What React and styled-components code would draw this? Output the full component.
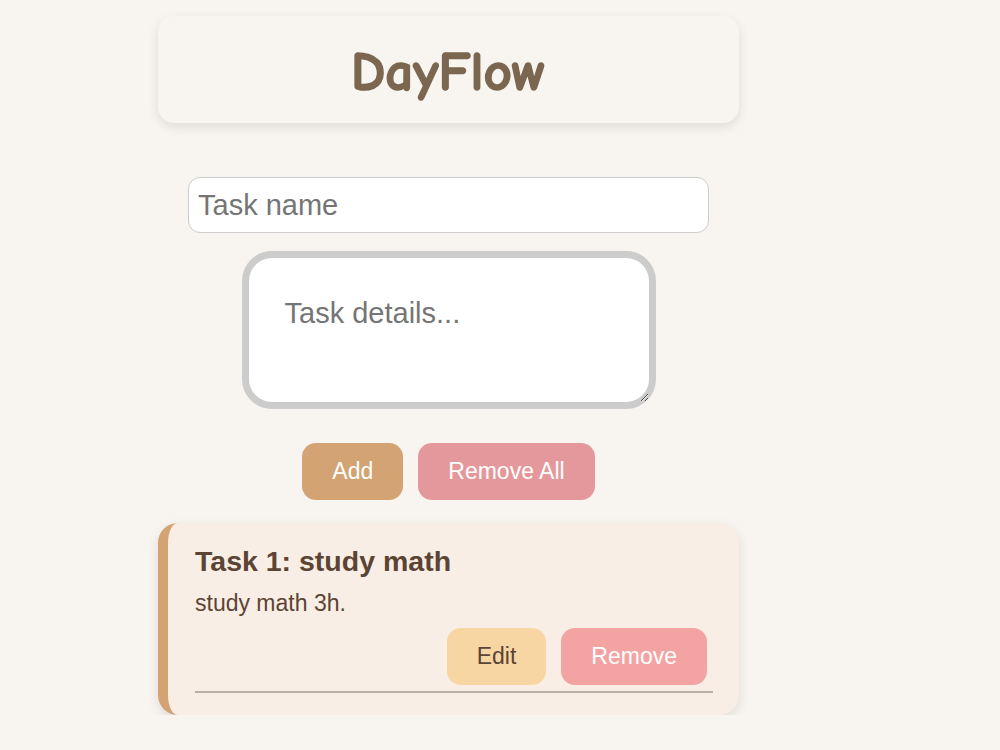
import styled, { createGlobalStyle } from "styled-components";

const GlobalStyle = createGlobalStyle`
  body {
    margin: 8px;
    background: #f8f4f0;
    font-family: "Liberation Sans", Arial, sans-serif;
  }
`;

function App() {
  return (
    <>
      <GlobalStyle />
      <Wrapper>
        <Header>
          <Title>DayFlow</Title>
        </Header>
        <Form>
          <NameInput placeholder="Task name" />
          <DetailsArea placeholder="Task details..." />
          <ButtonRow>
            <ActionButton $bg="#d4a373">Add</ActionButton>
            <ActionButton $bg="#e5989b">Remove All</ActionButton>
          </ButtonRow>
        </Form>
        <TaskCard>
          <TaskTitle>Task 1: study math</TaskTitle>
          <TaskText>study math 3h.</TaskText>
          <TaskActions>
            <ActionButton $bg="#f7d6a3" $color="#5a4434">Edit</ActionButton>
            <ActionButton $bg="#f4a3a3">Remove</ActionButton>
          </TaskActions>
          <Divider />
        </TaskCard>
      </Wrapper>
    </>
  );
}

export default App;

const Wrapper = styled.div`
  width: 581px;
  margin: 8px 0 0 150px;
  display: flex;
  flex-direction: column;
`;

const Header = styled.header`
  height: 107px;
  background: #f8f4ef;
  border-radius: 16px;
  box-shadow: 0 4px 12px rgba(0, 0, 0, 0.1);
  display: flex;
  align-items: center;
  justify-content: center;
`;

const Title = styled.h1`
  margin: 4px 0 0;
  font-family: "Comic Sans MS", "Comic Neue", cursive;
  font-size: 55px;
  font-weight: bold;
  color: #7b6650;
  -webkit-text-stroke: 1.5px #7b6650;
`;

const Form = styled.div`
  margin-top: 54px;
  display: flex;
  flex-direction: column;
  align-items: center;
`;

const NameInput = styled.input`
  box-sizing: border-box;
  width: 521px;
  height: 56px;
  padding: 0 9px;
  border: 1px solid #ccc;
  border-radius: 12px;
  background: #fff;
  font-family: "Liberation Sans", Arial, sans-serif;
  font-size: 29px;
  color: #333;
  &::placeholder {
    color: #757575;
  }
`;

const DetailsArea = styled.textarea`
  box-sizing: border-box;
  margin-top: 18px;
  width: 414px;
  height: 158px;
  padding: 41px 36px 0;
  border: 7px solid #ccc;
  border-radius: 30px;
  background: #fff;
  font-family: "Liberation Sans", Arial, sans-serif;
  font-size: 29px;
  line-height: 1;
  &::placeholder {
    color: #757575;
  }
`;

const ButtonRow = styled.div`
  margin-top: 34px;
  display: flex;
  gap: 15px;
`;

const ActionButton = styled.button`
  height: 57px;
  padding: 0 30px;
  border: none;
  border-radius: 14px;
  background: ${(p) => p.$bg};
  color: ${(p) => p.$color || "#fff"};
  font-family: "Liberation Sans", Arial, sans-serif;
  font-size: 23px;
  cursor: pointer;
`;

const TaskCard = styled.section`
  margin-top: 23px;
  box-sizing: border-box;
  height: 192px;
  padding: 22px 26px 0 27px;
  background: #f8eee5;
  border-left: 10px solid #d4a373;
  border-radius: 20px;
  box-shadow: 0 4px 12px rgba(0, 0, 0, 0.1);
  display: flex;
  flex-direction: column;
`;

const TaskTitle = styled.h3`
  margin: 0;
  font-size: 28.5px;
  font-weight: bold;
  color: #5c4434;
`;

const TaskText = styled.p`
  margin: 12px 0 0;
  font-size: 23px;
  color: #5c4434;
`;

const TaskActions = styled.div`
  margin-top: 11px;
  display: flex;
  justify-content: flex-end;
  gap: 15px;
  padding-right: 6px;
`;

const Divider = styled.hr`
  margin: 6px 0 0;
  border: none;
  border-top: 2px solid #b8b0a8;
`;
